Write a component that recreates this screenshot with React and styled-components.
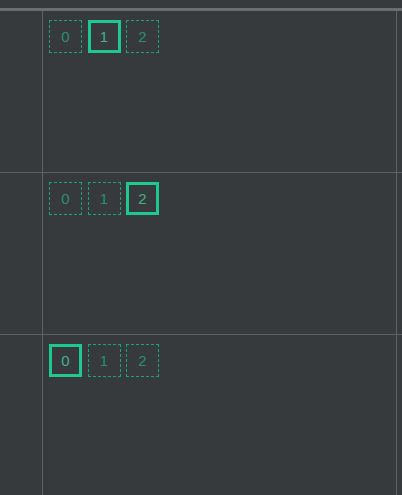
import React from "react";
import styled, { createGlobalStyle } from "styled-components";

const Global = createGlobalStyle`
  html, body { margin: 0; padding: 0; background: #363a3d; }
  body { font-family: "Liberation Sans", Arial, sans-serif; }
`;

const Page = styled.div`
  width: 402px;
  height: 495px;
  overflow: hidden;
  background: #363a3d;
  padding-top: 8px;
  box-sizing: border-box;
`;

const Table = styled.div`
  display: grid;
  grid-template-columns: 43px 354px 5px;
  grid-auto-rows: 162px;
  border-top: 3px solid #6b6e71;
`;

const Cell = styled.div`
  border-right: 1px solid #5f6265;
  border-bottom: 1px solid #5f6265;
  box-sizing: border-box;
  ${(p) => p.$last && "border-right: none;"}
`;

const Content = styled(Cell)`
  padding: 9px 0 0 6px;
  display: flex;
  align-items: flex-start;
  gap: 5.5px;
`;

const Item = styled.div`
  width: 33px;
  height: 33px;
  box-sizing: border-box;
  display: flex;
  align-items: center;
  justify-content: center;
  font-size: 15px;
  border: ${(p) => (p.$active ? "3px solid #1ec98e" : "1px dashed #1ca477")};
  color: ${(p) => (p.$active ? "#45b08a" : "#2b8f6b")};
`;

const rows = [1, 2, 0];

export default function App() {
  return (
    <Page>
      <Global />
      <Table>
        {rows.map((sel, r) => (
          <React.Fragment key={r}>
            <Cell />
            <Content>
              {[0, 1, 2].map((i) => (
                <Item key={i} $active={i === sel}>
                  {i}
                </Item>
              ))}
            </Content>
            <Cell $last />
          </React.Fragment>
        ))}
      </Table>
    </Page>
  );
}
